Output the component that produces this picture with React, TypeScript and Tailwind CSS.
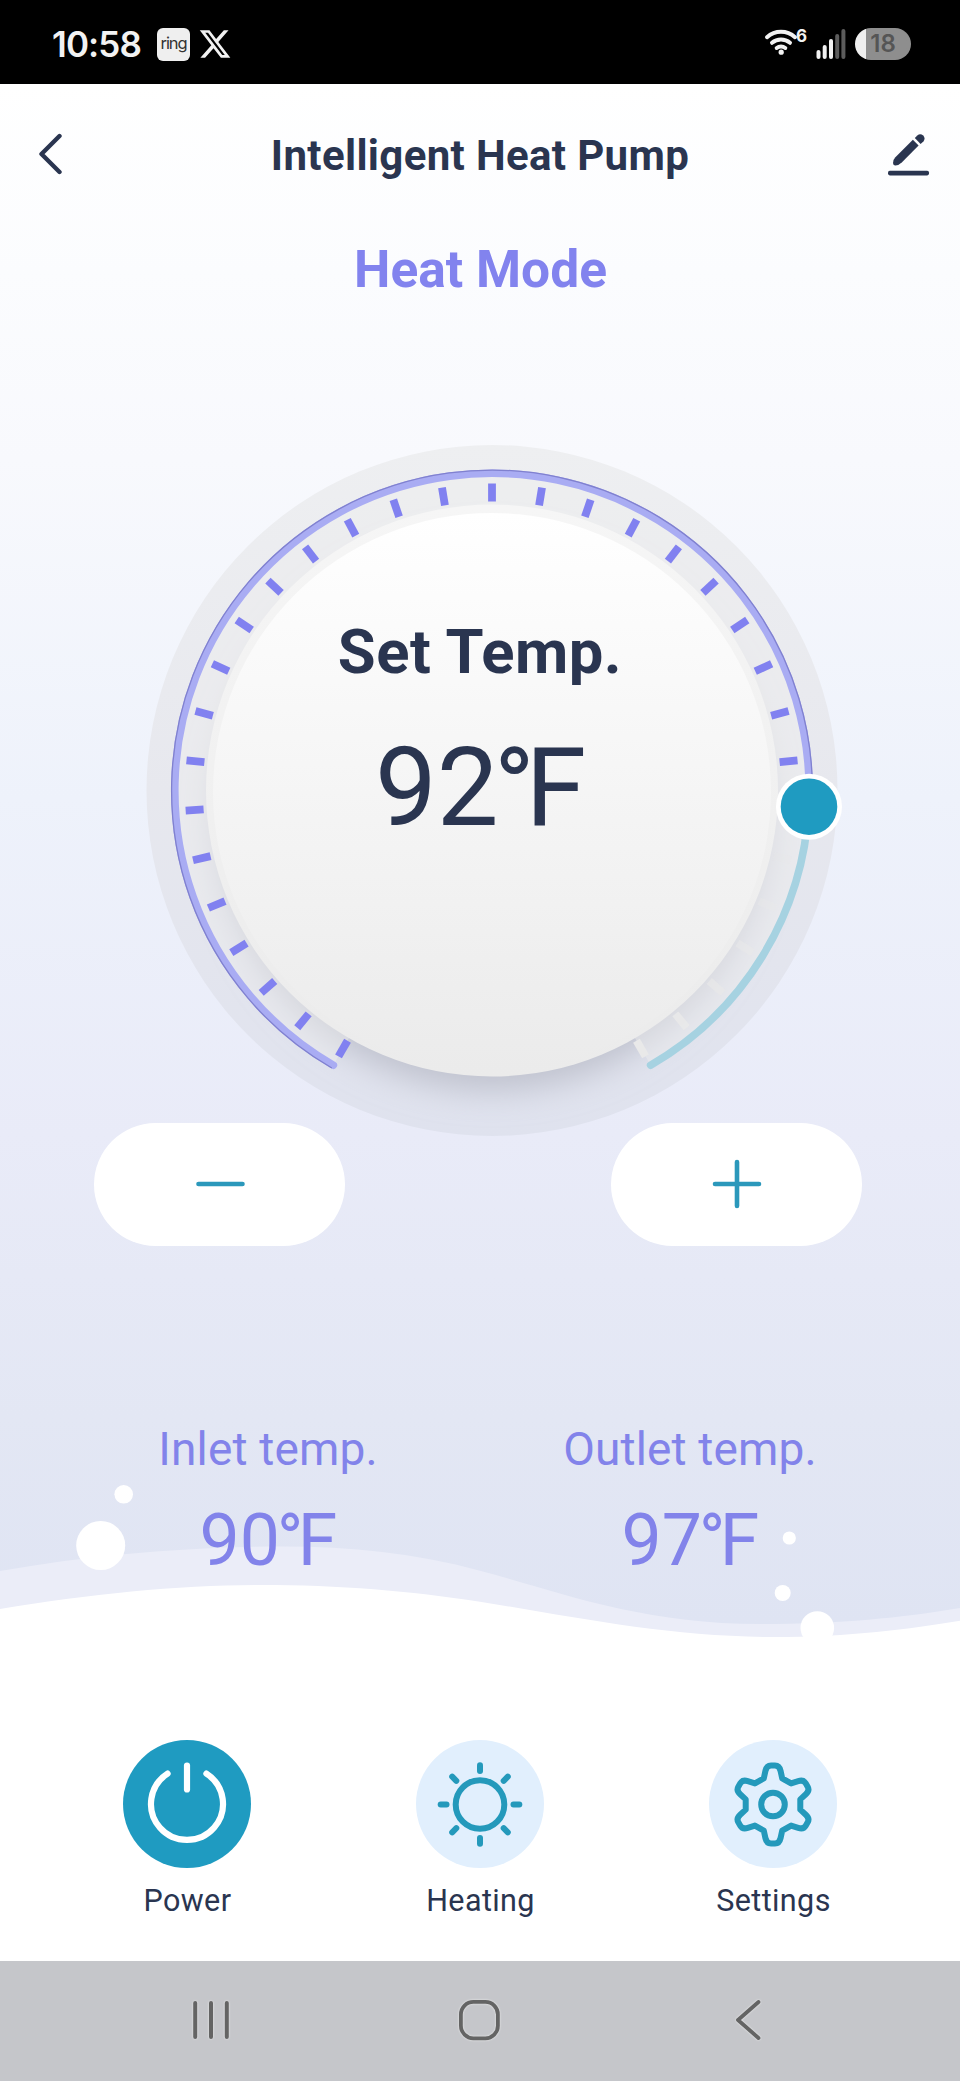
import type { ReactNode } from 'react';
import { FaXTwitter } from 'react-icons/fa6';

const CX = 492;
const CY = 350.5;
const TICK_STEP = 9.375;

// point on a circle round the dial centre, 0deg is straight up, clockwise
function polar(r: number, deg: number) {
  const a = (deg * Math.PI) / 180;
  return `${(CX + r * Math.sin(a)).toFixed(2)} ${(CY - r * Math.cos(a)).toFixed(2)}`;
}

function arc(r: number, from: number, to: number) {
  const large = to - from > 180 ? 1 : 0;
  return `M${polar(r, from)} A${r} ${r} 0 ${large} 1 ${polar(r, to)}`;
}

function StatusBar() {
  return (
    <div className="h-[84px] bg-black flex items-center pl-[52px] pr-[49px] pt-1">
      <span className="w-[105px] font-[Inter] text-[35px] leading-none font-semibold tracking-[-0.9px] text-[#f2f2f2]">10:58</span>
      <span className="w-[33px] h-[33px] rounded-[6px] bg-[#efefef] flex items-center justify-center font-[Inter] text-[16.5px] leading-none text-[#333] tracking-[-1.1px] pb-0.5">
        ring
      </span>
      <FaXTwitter className="ml-2 w-[34px] h-[34px] text-[#f2f2f2]" />
      <div className="flex-1" />
      <div className="flex items-start w-[46px] h-[33px]">
        <svg className="w-8 h-[33px] shrink-0 overflow-visible" viewBox="0 0 32 33" fill="none" stroke="#f2f2f2" strokeWidth="4" strokeLinecap="round">
          <path d="M3 9.2A21 21 0 0 1 31 9.2" />
          <path d="M8 14.8A14 14 0 0 1 26 14.8" />
          <path d="M12.7 20A7 7 0 0 1 21.3 20" />
          <circle cx="17.2" cy="24.2" r="2.6" fill="#f2f2f2" stroke="none" />
        </svg>
        <span className="font-[Inter] text-[17px] leading-none font-bold text-[#f2f2f2]">6</span>
      </div>
      <svg className="ml-1.5 w-[31px] h-[33px]" viewBox="0 0 31 33" fill="#f2f2f2">
        <rect x="0.5" y="22" width="4" height="9" rx="2" />
        <rect x="6.7" y="17" width="4" height="14" rx="2" />
        <rect x="13" y="11" width="4" height="20" rx="2" />
        <rect x="19.2" y="6" width="4" height="25" rx="2" fill="#5c5c5c" />
        <rect x="25.4" y="1" width="4" height="30" rx="2" fill="#5c5c5c" />
      </svg>
      <span className="ml-2 w-14 h-8 rounded-full bg-linear-to-r from-[#efefef] from-20% to-[#8e8e8e] to-20% flex items-center justify-center font-[Inter] text-[24px] leading-none font-semibold text-[#555]">
        18
      </span>
    </div>
  );
}

function Header() {
  return (
    <header className="h-[142px] pl-[38px] pr-[30px] flex items-center">
      <svg className="w-[25px] h-11" viewBox="0 0 25 44" fill="none" stroke="#2a3550" strokeWidth="4.4" strokeLinecap="round" strokeLinejoin="round">
        <path d="M21.5 3L3.5 21L21.5 39" />
      </svg>
      <h1 className="flex-1 pl-[9px] pt-0.5 text-center text-[42px] leading-none font-bold tracking-[0.35px]">Intelligent Heat Pump</h1>
      <svg className="w-[42px] h-[42px]" viewBox="0 0 42 42" fill="#2a3550">
        <path d="M24.9 5.8L30.6 11.4L14 28.2Q10.6 31.6 7 31.4Q5 31.2 5 29Q5 25.6 7.4 23.2Z" />
        <path d="M26.8 4L29.3 1.4Q32.3-1 35.2 1.6Q37.8 4.4 35.4 7.4L32.6 10Z" />
        <rect x="0" y="36.8" width="41" height="4.6" rx="1.8" />
      </svg>
    </header>
  );
}

function Dial() {
  const ticks = [];
  for (let i = -16; i <= 16; i++) ticks.push(i);

  return (
    <div className="mt-[144px] h-[683px] grid">
      <svg className="col-start-1 row-start-1 w-[960px] h-[682px] overflow-visible" viewBox="0 0 960 682" fill="none">
        <defs>
          <linearGradient id="ring" x1="0" y1="0" x2="0" y2="1">
            <stop offset="0" stopColor="#eeeff1" />
            <stop offset="0.5" stopColor="#e7e8ee" />
            <stop offset="1" stopColor="#dfe2ee" />
          </linearGradient>
          <linearGradient id="face" x1="0" y1="0" x2="0" y2="1">
            <stop offset="0" stopColor="#ffffff" />
            <stop offset="1" stopColor="#ebebeb" />
          </linearGradient>
          <linearGradient id="rim" x1="0" y1="0" x2="0" y2="1">
            <stop offset="0" stopColor="#f6f6f6" />
            <stop offset="1" stopColor="#ebebeb" />
          </linearGradient>
          <clipPath id="ringClip">
            <circle cx={CX} cy={CY} r="345.5" />
          </clipPath>
          <filter id="soft" x="-20%" y="-20%" width="140%" height="140%">
            <feGaussianBlur stdDeviation="16" />
          </filter>
        </defs>
        <circle cx={CX} cy={CY} r="345.5" fill="url(#ring)" />
        <g clipPath="url(#ringClip)">
          <circle cx={CX} cy={CY + 24} r="276" fill="#b4b7c3" fillOpacity="0.75" filter="url(#soft)" />
        </g>
        <path d={arc(300, -150, 150)} stroke="#eeeeee" strokeOpacity="0.45" strokeWidth="34" />
        <path d={arc(317.2, 92.9, 150)} stroke="#a6d2e1" strokeWidth="7.6" strokeLinecap="round" />
        <path d={arc(317.2, -150, 92.9)} stroke="#a9acf3" strokeWidth="7.6" strokeLinecap="round" />
        <path d={arc(320.4, -150, 92.9)} stroke="#8081cf" strokeWidth="1.3" />
        {ticks.map((i) => (
          <rect
            key={i}
            x={CX - 3.9}
            y={CY - 307}
            width="7.8"
            height="18"
            transform={`rotate(${i * TICK_STEP} ${CX} ${CY})`}
            fill={i > 10 ? '#e9e9e9' : '#8181f0'}
            opacity={i > 10 ? (i - 10) / 6 : 1}
          />
        ))}
        <circle cx={CX} cy={CY} r="286" fill="url(#rim)" />
        <circle cx={CX} cy={CY + 1.5} r="279" fill="url(#face)" />
        <circle cx="809" cy="366.7" r="33" fill="#fff" />
        <circle cx="809" cy="366.7" r="28.3" fill="#1f9bc1" />
      </svg>
      <div className="col-start-1 row-start-1 z-10 flex flex-col items-center pt-[182px]">
        <div className="text-[61.5px] leading-none font-bold tracking-[0.5px]">Set Temp.</div>
        <div className="mt-[50px] pr-2 text-[110px] leading-none">
          92<span className="-ml-[0.045em] tracking-[-0.085em]">°F</span>
        </div>
      </div>
    </div>
  );
}

function StepButton({ label, children }: { label: string; children: ReactNode }) {
  return (
    <button aria-label={label} className="w-[251px] h-[123px] rounded-full bg-white flex items-center justify-center">
      <svg className="w-[52px] h-[52px]" viewBox="0 0 52 52" stroke="#2b98bb" strokeWidth="4.6" strokeLinecap="round">
        {children}
      </svg>
    </button>
  );
}

function Reading({ label, value }: { label: string; value: number }) {
  return (
    <div className="flex flex-col items-center text-[#8283ea]">
      <div className="text-[46px] leading-none tracking-[0.15px]">{label}</div>
      <div className="mt-[33px] pr-[5px] text-[71.5px] leading-none">
        {value}<span className="-ml-[0.045em] tracking-[-0.08em]">°F</span>
      </div>
    </div>
  );
}

// white hills and bubbles behind the readings
function Waves() {
  return (
    <svg className="absolute left-0 bottom-0 w-[960px] h-[481px]" viewBox="0 1480 960 481">
      <path
        d="M0 1571C90 1555 190 1546.5 283 1546.5C350 1546.5 415 1553 480 1570.7C560 1592 640 1624 760 1624C840 1624 900 1618 960 1608V1962H0Z"
        fill="#ebedf8"
      />
      <path
        d="M0 1609C90 1594 180 1585 260 1585C340 1585 410 1591 480 1601.7C580 1618 670 1637 773 1637C850 1637 910 1629 960 1620.7V1962H0Z"
        fill="#fff"
      />
      <g fill="#fff">
        <circle cx="123.7" cy="1494.3" r="9.3" />
        <circle cx="100.7" cy="1545.5" r="24.5" />
        <circle cx="789.3" cy="1538" r="6.6" />
        <circle cx="782.7" cy="1593" r="8" />
        <circle cx="817.3" cy="1628" r="16.8" />
      </g>
    </svg>
  );
}

function PowerIcon() {
  return (
    <svg className="w-32 h-32" viewBox="0 0 128 128" fill="none" stroke="#fff" strokeWidth="6.2" strokeLinecap="round">
      <path d="M44.6 33.6A36 36 0 1 0 83.4 33.6" />
      <path d="M64 25.5V49.5" />
    </svg>
  );
}

function SunIcon() {
  return (
    <svg className="w-32 h-32" viewBox="0 0 128 128" fill="none" stroke="#2499bb" strokeWidth="6" strokeLinecap="round">
      <circle cx="64" cy="64.5" r="24.3" />
      {[0, 45, 90, 135, 180, 225, 270, 315].map((deg) => (
        <path key={deg} d="M64 31V25.2" transform={`rotate(${deg} 64 64.5)`} />
      ))}
    </svg>
  );
}

function gearPath() {
  const tooth = [[-9.2, -26.2], [-7.6, -33.5], [-6.4, -38.9], [-2, -38.9], [2, -38.9], [6.4, -38.9], [7.6, -33.5], [9.2, -26.2]];
  let d = '';
  for (let k = 0; k < 6; k++) {
    const a = (k * Math.PI) / 3;
    const p = tooth.map(([x, y]) => {
      const px = 64 + x * Math.cos(a) - y * Math.sin(a);
      const py = 64.5 + x * Math.sin(a) + y * Math.cos(a);
      return `${px.toFixed(2)} ${py.toFixed(2)}`;
    });
    d += `${k ? 'L' : 'M'}${p[0]}L${p[1]}Q${p[2]} ${p[3]}L${p[4]}Q${p[5]} ${p[6]}L${p[7]}`;
  }
  return d + 'Z';
}

function GearIcon() {
  return (
    <svg className="w-32 h-32" viewBox="0 0 128 128" fill="none" stroke="#2499bb" strokeWidth="6" strokeLinejoin="round">
      <path d={gearPath()} />
      <circle cx="64" cy="64.5" r="11.8" />
    </svg>
  );
}

function Action({ label, active, children }: { label: string; active?: boolean; children: ReactNode }) {
  return (
    <button className="flex flex-col items-center">
      <span className={active ? 'rounded-full bg-[#1f9bc1]' : 'rounded-full bg-[#e1effd]'}>{children}</span>
      <span className="mt-[18px] pl-0.5 text-[30.5px] leading-none tracking-[0.4px]">{label}</span>
    </button>
  );
}

function SystemNav() {
  return (
    <div className="h-[120px] bg-[#c5c6ca] pl-[190px] pb-0.5 flex items-center">
      <svg className="w-[42px] h-11 drop-shadow-[0_0_1px_#eee]" viewBox="0 0 42 44" stroke="#646464" strokeWidth="4" strokeLinecap="round">
        <path d="M5.2 5V39M21 5V39M36.8 5V39" />
      </svg>
      <svg className="w-[46px] h-11 ml-[224px] drop-shadow-[0_0_1px_#eee]" viewBox="0 0 46 44" fill="none" stroke="#646464" strokeWidth="3.8">
        <rect x="4.9" y="3.9" width="37" height="36.4" rx="12.5" />
      </svg>
      <svg className="w-8 h-11 ml-[230px] drop-shadow-[0_0_1px_#eee]" viewBox="0 0 32 44" fill="none" stroke="#646464" strokeWidth="3.8" strokeLinecap="round" strokeLinejoin="round">
        <path d="M26.5 4L6 22L26.5 40" />
      </svg>
    </div>
  );
}

export default function App() {
  return (
    <div className="w-[960px] h-[2081px] overflow-hidden font-[Roboto,sans-serif] text-[#2a3550]">
      <StatusBar />
      <main className="relative h-[1877px] bg-[linear-gradient(to_bottom,#fff_0%,#fbfcfe_10%,#f8f9fd_20%,#eef2fb_38%,#e9ebf8_56%,#e3e7f4_71%,#dfe4f3_82%)]">
        <Waves />
        <div className="relative">
          <Header />
          <h2 className="mt-[18px] pl-px text-center text-[51.5px] leading-none font-bold text-[#8283ee]">Heat Mode</h2>
          <Dial />
          <div className="flex justify-between pl-[94px] pr-[98px]">
            <StepButton label="Decrease">
              <path d="M4.5 26H48.5" />
            </StepButton>
            <StepButton label="Increase">
              <path d="M4 26H48M26 4V48" />
            </StepButton>
          </div>
          <div className="mt-[180px] grid grid-cols-2 pl-[57px] pr-[59px]">
            <Reading label="Inlet temp." value={90} />
            <Reading label="Outlet temp." value={97} />
          </div>
          <div className="mt-[164px] grid grid-cols-3 pl-10 pr-[41px]">
            <Action label="Power" active>
              <PowerIcon />
            </Action>
            <Action label="Heating">
              <SunIcon />
            </Action>
            <Action label="Settings">
              <GearIcon />
            </Action>
          </div>
        </div>
      </main>
      <SystemNav />
    </div>
  );
}
